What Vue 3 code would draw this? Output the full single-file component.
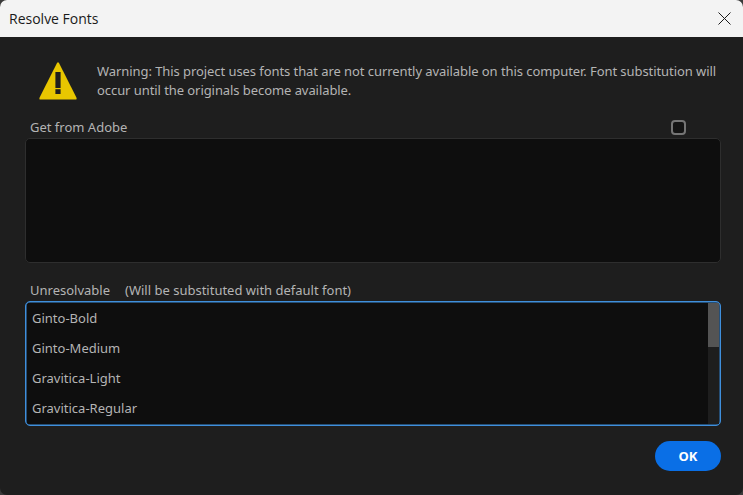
<template>
  <div class="dialog">
    <header class="titlebar">
      <span class="title">Resolve Fonts</span>
      <button class="close" aria-label="Close">
        <svg width="13" height="13" viewBox="0 0 13 13"><path d="M0.5 0.5 L12.5 12.5 M12.5 0.5 L0.5 12.5" stroke="#1a1a1a" stroke-width="1" fill="none" /></svg>
      </button>
    </header>

    <main class="content">
      <div class="warning">
        <svg class="warn-icon" width="38" height="38" viewBox="0 0 38 38">
          <path d="M18 1 Q19 -0.4 20 1 L37.4 35.6 Q38.2 37.6 36.4 37.6 L1.6 37.6 Q-0.2 37.6 0.6 35.6 Z" fill="#e8c600" />
          <rect x="16.4" y="10" width="5.2" height="16" fill="#1e1e1e" />
          <rect x="16.4" y="27.2" width="5.2" height="4.8" fill="#1e1e1e" />
        </svg>
        <p class="warning-text">Warning: This project uses fonts that are not currently available on this computer. Font substitution will occur until the originals become available.</p>
      </div>

      <div class="label-row adobe-row">
        <span>Get from Adobe</span>
        <span class="checkbox"></span>
      </div>
      <div class="box"></div>

      <div class="label-row unresolved-row">
        <span class="unresolved-label">Unresolvable</span>
        <span>(Will be substituted with default font)</span>
      </div>
      <div class="list">
        <ul>
          <li v-for="font in fonts" :key="font">{{ font }}</li>
        </ul>
        <div class="scrollbar"><div class="thumb"></div></div>
      </div>

      <div class="actions">
        <button class="ok">OK</button>
      </div>
    </main>
  </div>
</template>

<script setup>
const fonts = ['Ginto-Bold', 'Ginto-Medium', 'Gravitica-Light', 'Gravitica-Regular']
</script>

<style>
html, body {
  background: #3a3a3a;
  overflow: hidden;
}
</style>

<style scoped>
.dialog {
  width: 743px;
  height: 495px;
  display: flex;
  flex-direction: column;
  border-radius: 7px;
  overflow: hidden;
  background: #1e1e1e;
  font-family: "Noto Sans", "Open Sans", sans-serif;
}

.titlebar {
  height: 37px;
  flex: none;
  display: flex;
  align-items: center;
  justify-content: space-between;
  padding: 0 12px 0 9px;
  background: #f3f3f3;
}

.title {
  font-family: "Open Sans", sans-serif;
  font-size: 14px;
  color: #1a1a1a;
}

.close {
  display: flex;
  width: 13px;
  height: 13px;
  padding: 0;
  border: 0;
  background: none;
}

.content {
  flex: 1;
  padding: 25px 22px 0 25px;
  font-size: 13px;
  color: #b4b4b4;
}

.warning {
  display: flex;
  gap: 20px;
  padding-left: 14px;
  height: 55px;
}

.warn-icon {
  flex: none;
}

.warning-text {
  margin: 0;
  width: 640px;
  font-size: 13px;
  line-height: 19px;
  letter-spacing: -0.07px;
}

.label-row {
  display: flex;
  align-items: center;
  padding-left: 5px;
  line-height: 20px;
}

.adobe-row {
  justify-content: space-between;
  padding-right: 35px;
  height: 20px;
  margin-bottom: 1px;
}

.checkbox {
  width: 15px;
  height: 15px;
  box-sizing: border-box;
  border: 2px solid #757575;
  border-radius: 4px;
  background: #141414;
}

.box {
  height: 125px;
  box-sizing: border-box;
  background: #0e0e0e;
  border: 1px solid #2e2e2e;
  border-radius: 5px;
}

.unresolved-row {
  margin-top: 16px;
  height: 22px;
}

.unresolved-label {
  margin-right: 15px;
}

.list {
  position: relative;
  height: 125px;
  box-sizing: border-box;
  background: #0e0e0e;
  border: 1px solid #3f8fdc;
  box-shadow: inset 0 0 0 0.5px #3f8fdc;
  border-radius: 5px;
  overflow: hidden;
}

.list ul {
  margin: 0;
  padding: 1px 0 0 6px;
  list-style: none;
}

.list li {
  height: 30px;
  line-height: 30px;
}

.scrollbar {
  position: absolute;
  top: 1px;
  right: 1px;
  bottom: 1px;
  width: 11px;
  background: #1e1e1e;
}

.thumb {
  height: 44px;
  background: #545454;
}

.actions {
  display: flex;
  justify-content: flex-end;
  margin-top: 15px;
}

.ok {
  width: 66px;
  height: 30px;
  padding: 0;
  border: 0;
  border-radius: 15px;
  background: #0a6fe6;
  color: #fff;
  font-family: "Noto Sans", sans-serif;
  font-size: 13px;
  font-weight: 700;
}
</style>
